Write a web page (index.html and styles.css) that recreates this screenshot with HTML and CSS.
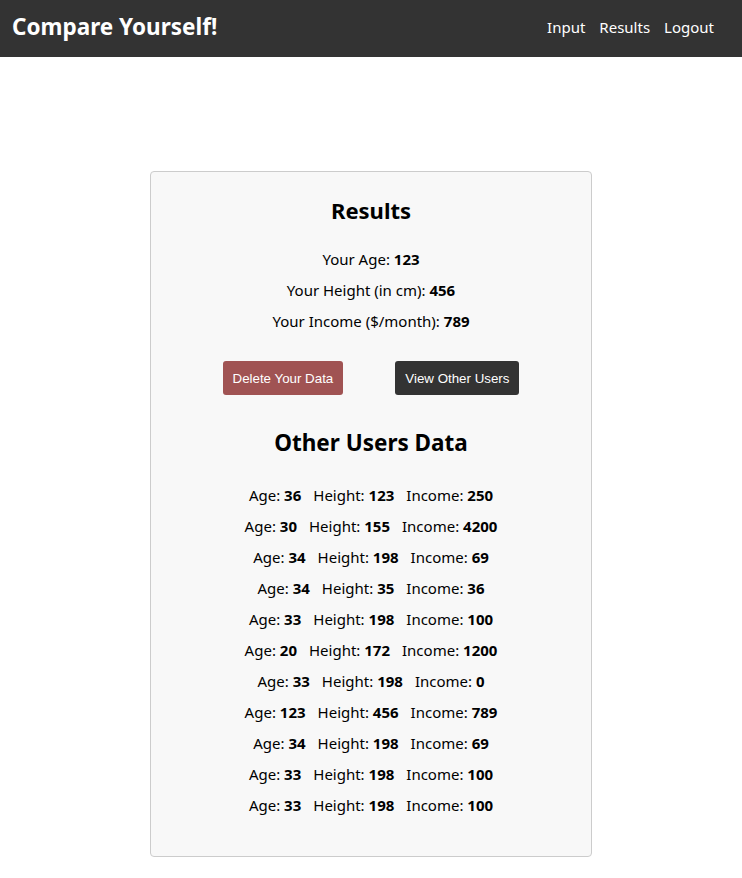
FILE: index.html
```html
<!DOCTYPE html>
<html>
<head>
<meta charset="utf-8">
<title>Compare Yourself!</title>
<link rel="stylesheet" href="styles.css">
</head>
<body>
<header class="topbar">
  <span class="brand">Compare Yourself!</span>
  <nav class="nav">
    <a href="#">Input</a>
    <a href="#">Results</a>
    <a href="#">Logout</a>
  </nav>
</header>
<main class="main">
  <section class="card">
    <h2 class="title">Results</h2>
    <div class="lines">
      <p>Your Age: <b>123</b></p>
      <p>Your Height (in cm): <b>456</b></p>
      <p>Your Income ($/month): <b>789</b></p>
    </div>
    <div class="actions">
      <button class="btn btn-danger">Delete Your Data</button>
      <button class="btn btn-dark">View Other Users</button>
    </div>
    <h2 class="title title-lg">Other Users Data</h2>
    <div class="lines">
      <p><span>Age: <b>36</b></span><span>Height: <b>123</b></span><span>Income: <b>250</b></span></p>
      <p><span>Age: <b>30</b></span><span>Height: <b>155</b></span><span>Income: <b>4200</b></span></p>
      <p><span>Age: <b>34</b></span><span>Height: <b>198</b></span><span>Income: <b>69</b></span></p>
      <p><span>Age: <b>34</b></span><span>Height: <b>35</b></span><span>Income: <b>36</b></span></p>
      <p><span>Age: <b>33</b></span><span>Height: <b>198</b></span><span>Income: <b>100</b></span></p>
      <p><span>Age: <b>20</b></span><span>Height: <b>172</b></span><span>Income: <b>1200</b></span></p>
      <p><span>Age: <b>33</b></span><span>Height: <b>198</b></span><span>Income: <b>0</b></span></p>
      <p><span>Age: <b>123</b></span><span>Height: <b>456</b></span><span>Income: <b>789</b></span></p>
      <p><span>Age: <b>34</b></span><span>Height: <b>198</b></span><span>Income: <b>69</b></span></p>
      <p><span>Age: <b>33</b></span><span>Height: <b>198</b></span><span>Income: <b>100</b></span></p>
      <p><span>Age: <b>33</b></span><span>Height: <b>198</b></span><span>Income: <b>100</b></span></p>
    </div>
  </section>
</main>
</body>
</html>
```
FILE: styles.css
```css
* { box-sizing: border-box; }
body {
  margin: 0;
  font-family: "Noto Sans", "Open Sans", sans-serif;
  color: #000;
  background: #fff;
}
.topbar {
  height: 57px;
  background: #333;
  display: flex;
  align-items: center;
  justify-content: space-between;
  padding: 0 28px 0 12px;
}
.brand {
  color: #fff;
  font-weight: 700;
  font-size: 22.5px;
  line-height: 30px;
  margin-top: -3px;
}
.nav {
  display: flex;
  gap: 14px;
  margin-top: -4px;
}
.nav a {
  color: #fff;
  text-decoration: none;
  font-size: 15px;
}
.main {
  padding-top: 114px;
  display: flex;
  justify-content: center;
}
.card {
  width: 442px;
  background: #f8f8f8;
  border: 1px solid #ccc;
  border-radius: 4px;
  padding: 23px 0 40px;
  text-align: center;
}
.title {
  margin: 0;
  font-size: 22px;
  line-height: 30px;
  font-weight: 700;
}
.title-lg {
  font-size: 22.5px;
  line-height: 32px;
  margin-top: 32px;
}
.lines {
  margin-top: 24px;
  display: flex;
  flex-direction: column;
  gap: 10px;
}
.title-lg + .lines { margin-top: 26px; }
.lines p {
  margin: 0;
  font-size: 15px;
  line-height: 21px;
}
.lines span + span { margin-left: 12px; }
.actions {
  margin-top: 29px;
  display: flex;
  justify-content: center;
  gap: 52px;
}
.btn {
  font-family: "Liberation Sans", Arial, sans-serif;
  font-size: 13.333px;
  color: #fff;
  border: none;
  border-radius: 3px;
  height: 34px;
  padding: 0 10px;
}
.btn-danger { background: #a05353; }
.btn-dark { background: #333; }
```
